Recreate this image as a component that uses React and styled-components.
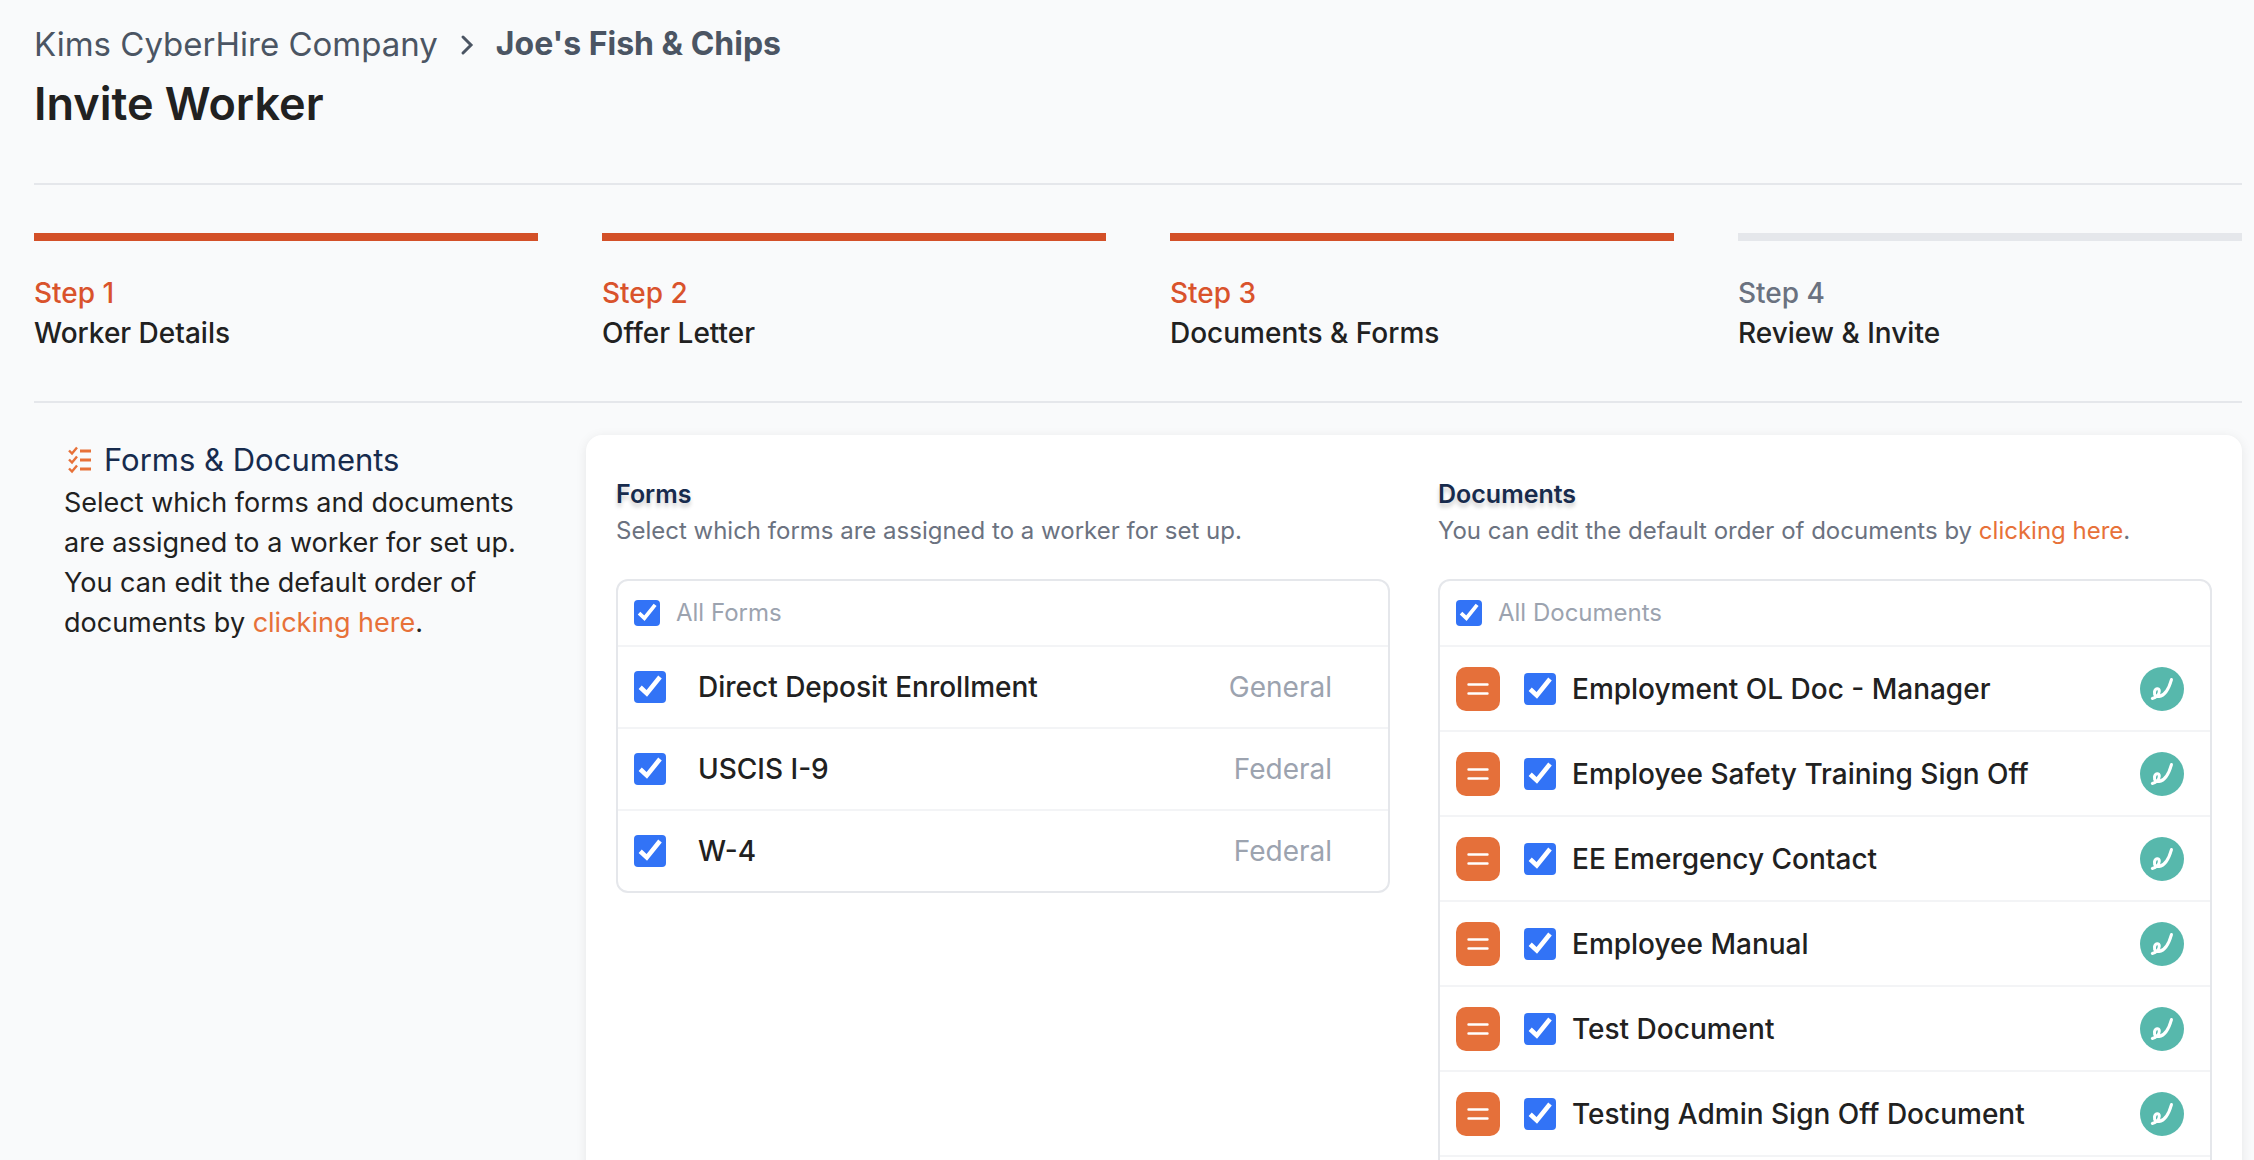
import React, { useState } from 'react';
import styled, { createGlobalStyle } from 'styled-components';

const GlobalStyle = createGlobalStyle`
  * {
    box-sizing: border-box;
  }

  body {
    margin: 0;
    background: #f9fafb;
    color: #212121;
    font-family: 'Inter', 'Roboto', system-ui, sans-serif;
    font-size: 27px;
    line-height: 40px;
  }

  h1, h2, h3, p, ul, ol {
    margin: 0;
    padding: 0;
  }

  ul, ol {
    list-style: none;
  }
`;

const PageWrapper = styled.div`
  height: 100vh;
  overflow: hidden;
  padding: 20px 12px 0 34px;
`;

const Header = styled.header`
  padding-bottom: 47px;
  border-bottom: 2px solid #e5e7eb;
`;

const Breadcrumb = styled.nav`
  display: flex;
  align-items: center;
  gap: 20px;
  margin-bottom: 4px;
  font-size: 33px;
  line-height: 48px;
  color: #4b5563;

  a {
    color: inherit;
    text-decoration: none;
  }

  strong {
    font-size: 32px;
    font-weight: 700;
  }
`;

const PageTitle = styled.h1`
  font-size: 45px;
  line-height: 64px;
  font-weight: 600;
`;

const Steps = styled.ol`
  display: grid;
  grid-template-columns: repeat(4, 1fr);
  gap: 64px;
  padding: 48px 0;
  border-bottom: 2px solid #e5e7eb;
`;

const Step = styled.li`
  border-top: 8px solid ${({ $done }) => ($done ? '#d35028' : '#e5e7eb')};
  padding-top: 32px;
  font-size: 28px;
  font-weight: 500;

  .number {
    color: ${({ $done }) => ($done ? '#d9532c' : '#6b7280')};
  }
`;

const Content = styled.main`
  display: grid;
  grid-template-columns: 1fr 3fr;
`;

const Intro = styled.section`
  padding: 34px 30px;
`;

const IntroTitle = styled.h2`
  display: flex;
  align-items: center;
  gap: 12px;
  font-size: 31px;
  line-height: 46px;
  font-weight: 400;
  color: #172b4d;
`;

const Link = styled.a`
  color: #e77139;
  text-decoration: none;
`;

const Card = styled.section`
  display: grid;
  grid-template-columns: 1fr 1fr;
  gap: 48px;
  margin-top: 32px;
  padding: 40px 30px;
  background: #fff;
  border-radius: 16px;
  box-shadow: 0 2px 12px rgba(0, 0, 0, 0.08);
`;

const GroupTitle = styled.h3`
  font-size: 25px;
  line-height: 38px;
  font-weight: 600;
  color: #172b4d;
  text-shadow: 0 4px 4px rgba(0, 0, 0, 0.2);
`;

const GroupText = styled.p`
  font-size: 24px;
  line-height: 36px;
  color: #6b7280;
  margin-bottom: 30px;
`;

const List = styled.ul`
  border: 2px solid #e5e7eb;
  border-radius: 12px;
`;

const Row = styled.li`
  display: flex;
  align-items: center;
  height: ${({ $height }) => $height}px;
  padding: 0 ${({ $end }) => $end || 16}px 0 16px;
  font-size: 28px;
  font-weight: 500;

  & + & {
    border-top: 2px solid #f3f4f6;
  }

  label {
    display: flex;
    align-items: center;
    flex: 1;
    gap: ${({ $gap }) => $gap || 16}px;
  }
`;

const AllLabel = styled.label`
  font-size: 24px;
  font-weight: 400;
  color: #9ca3af;
`;

const Checkbox = styled.input.attrs({ type: 'checkbox' })`
  appearance: none;
  flex: none;
  width: ${({ $size }) => $size || 32}px;
  height: ${({ $size }) => $size || 32}px;
  margin: 0;
  border: 2px solid #6b7280;
  border-radius: 4px;

  &:checked {
    border: 0;
    background: #3273f6 center / contain no-repeat
      url("data:image/svg+xml,%3Csvg xmlns='http://www.w3.org/2000/svg' viewBox='0 0 32 32' fill='none' stroke='white' stroke-width='4.6'%3E%3Cpath d='M6.2 16.2l6.6 6.2L26 6'/%3E%3C/svg%3E");
  }
`;

const Category = styled.span`
  font-weight: 400;
  color: #9ca3af;
`;

const DragHandle = styled.button`
  display: grid;
  place-items: center;
  width: 44px;
  height: 44px;
  margin-right: 24px;
  padding: 0;
  border: 0;
  border-radius: 10px;
  background: #e5703a;
  cursor: grab;
`;

const SignBadge = styled.span`
  display: grid;
  place-items: center;
  width: 44px;
  height: 44px;
  border-radius: 50%;
  background: #57b8ac;
`;

const ChecklistIcon = () => (
  <svg width="28" height="28" viewBox="0 0 28 28" fill="none" stroke="#e77139" aria-hidden="true">
    <path strokeWidth="3" d="M16 5h11M16 14h11M16 23h11" />
    <path strokeWidth="2.4" d="M5 4.5l3 3 5-6M5 13.500l3 3 5-6M5 22.500l3 3 5-6" />
  </svg>
);

const ChevronIcon = () => (
  <svg width="18" height="24" viewBox="0 0 18 24" fill="none" stroke="#4b5563" strokeWidth="3" strokeLinecap="round" aria-hidden="true">
    <path d="M5 5l8 8-8 8" />
  </svg>
);

const HandleIcon = () => (
  <svg width="22" height="14" viewBox="0 0 22 14" stroke="#fff" strokeWidth="2.4" strokeLinecap="round" aria-hidden="true">
    <path d="M1.500 2.500h19M1.500 11.500h19" />
  </svg>
);

const SignatureIcon = () => (
  <svg width="44" height="44" viewBox="0 0 44 44" fill="none" stroke="#fff" strokeWidth="3" strokeLinecap="round" strokeLinejoin="round" aria-hidden="true">
    <path d="M12.300 31.500c4-1 7-4 7-7.500 0-3.500-4.300-3-4.800 1-.4 3.500 1.500 5 4.500 4.500 6-1 10-8 12.500-17" />
  </svg>
);

const steps = [
  { name: 'Worker Details', done: true },
  { name: 'Offer Letter', done: true },
  { name: 'Documents & Forms', done: true },
  { name: 'Review & Invite', done: false },
];

const forms = [
  { name: 'Direct Deposit Enrollment', category: 'General' },
  { name: 'USCIS I-9', category: 'Federal' },
  { name: 'W-4', category: 'Federal' },
];

const documents = [
  { name: 'Employment OL Doc - Manager' },
  { name: 'Employee Safety Training Sign Off' },
  { name: 'EE Emergency Contact' },
  { name: 'Employee Manual' },
  { name: 'Test Document' },
  { name: 'Testing Admin Sign Off Document' },
];

const useSelection = (items) => {
  const [selected, setSelected] = useState(items.map((item) => item.name));
  const allSelected = selected.length === items.length;

  const toggle = (name) =>
    setSelected((prev) => (prev.includes(name) ? prev.filter((n) => n !== name) : [...prev, name]));
  const toggleAll = () => setSelected(allSelected ? [] : items.map((item) => item.name));

  return { selected, allSelected, toggle, toggleAll };
};

const FormsGroup = () => {
  const { selected, allSelected, toggle, toggleAll } = useSelection(forms);

  return (
    <div>
      <GroupTitle>Forms</GroupTitle>
      <GroupText>Select which forms are assigned to a worker for set up.</GroupText>
      <List>
        <Row $height={64}>
          <AllLabel>
            <Checkbox $size={26} checked={allSelected} onChange={toggleAll} />
            All Forms
          </AllLabel>
        </Row>
        {forms.map((form) => (
          <Row key={form.name} $height={82} $gap={32} $end={56}>
            <label>
              <Checkbox checked={selected.includes(form.name)} onChange={() => toggle(form.name)} />
              {form.name}
            </label>
            <Category>{form.category}</Category>
          </Row>
        ))}
      </List>
    </div>
  );
};

const DocumentsGroup = () => {
  const { selected, allSelected, toggle, toggleAll } = useSelection(documents);

  return (
    <div>
      <GroupTitle>Documents</GroupTitle>
      <GroupText>
        You can edit the default order of documents by <Link href="#order">clicking here</Link>.
      </GroupText>
      <List>
        <Row $height={64}>
          <AllLabel>
            <Checkbox $size={26} checked={allSelected} onChange={toggleAll} />
            All Documents
          </AllLabel>
        </Row>
        {documents.map((doc) => (
          <Row key={doc.name} $height={85} $end={26}>
            <DragHandle type="button" aria-label={`Reorder ${doc.name}`}>
              <HandleIcon />
            </DragHandle>
            <label>
              <Checkbox checked={selected.includes(doc.name)} onChange={() => toggle(doc.name)} />
              {doc.name}
            </label>
            <SignBadge>
              <SignatureIcon />
            </SignBadge>
          </Row>
        ))}
        {/* free slot at the end of the list to drop a document into */}
        <Row $height={85} />
      </List>
    </div>
  );
};

const App = () => (
  <PageWrapper>
    <GlobalStyle />
    <Header>
      <Breadcrumb>
        <a href="#company">Kims CyberHire Company</a>
        <ChevronIcon />
        <strong>Joe's Fish & Chips</strong>
      </Breadcrumb>
      <PageTitle>Invite Worker</PageTitle>
    </Header>

    <Steps>
      {steps.map((step, index) => (
        <Step key={step.name} $done={step.done}>
          <div className="number">Step {index + 1}</div>
          <div>{step.name}</div>
        </Step>
      ))}
    </Steps>

    <Content>
      <Intro>
        <IntroTitle>
          <ChecklistIcon />
          Forms & Documents
        </IntroTitle>
        <p>
          Select which forms and documents are assigned to a worker for set up. You can edit the
          default order of documents by <Link href="#order">clicking here</Link>.
        </p>
      </Intro>
      <Card>
        <FormsGroup />
        <DocumentsGroup />
      </Card>
    </Content>
  </PageWrapper>
);

export default App;
